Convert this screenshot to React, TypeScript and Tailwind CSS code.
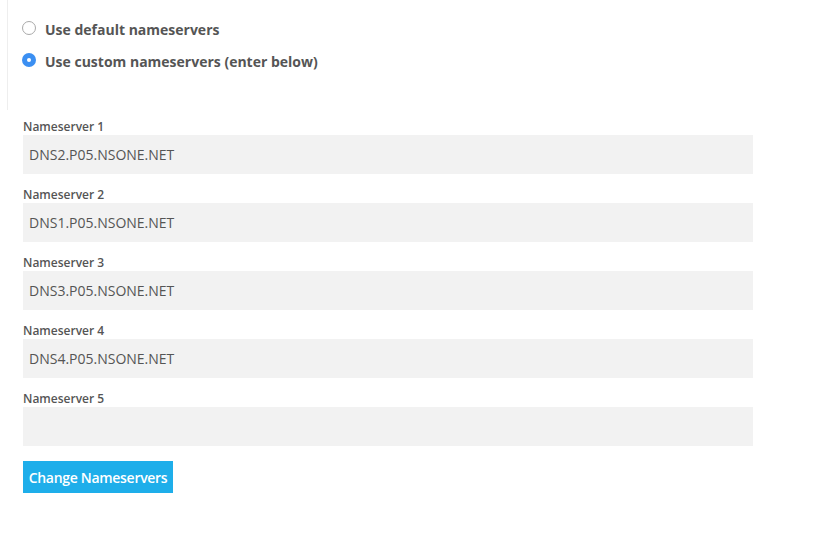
const servers = [
  'DNS2.P05.NSONE.NET',
  'DNS1.P05.NSONE.NET',
  'DNS3.P05.NSONE.NET',
  'DNS4.P05.NSONE.NET',
  '',
]

const Radio = ({ checked }: { checked?: boolean }) =>
  checked ? (
    <span className="w-[14px] h-[14px] rounded-full bg-[#3b8ff2] flex items-center justify-center shrink-0">
      <span className="w-[4px] h-[4px] rounded-full bg-white"></span>
    </span>
  ) : (
    <span className="w-[14px] h-[14px] rounded-full border border-[#a9a9a9] bg-white shrink-0"></span>
  )

export default function App() {
  return (
    <div className="w-[831px] h-[549px] bg-white text-[#555] font-['Open_Sans',sans-serif]">
      <div className="ml-[7px] h-[110px] border-l border-[#eeeeee] pl-[14px] pt-[20px]">
        <label className="flex items-center gap-[9px] h-[15px] text-[14px] font-bold leading-[16px]">
          <Radio />
          <span className="relative top-[2px]">Use default nameservers</span>
        </label>
        <label className="flex items-center gap-[9px] h-[15px] mt-[17px] text-[14px] font-bold leading-[16px]">
          <Radio checked />
          <span className="relative top-[2px]">Use custom nameservers (enter below)</span>
        </label>
      </div>
      <div className="pl-[23px] pt-[9px]">
        {servers.map((s, i) => (
          <div key={i} className="mb-[13px]">
            <div className="text-[12px] font-semibold leading-[16px]">Nameserver {i + 1}</div>
            <div className="w-[730px] h-[39px] bg-[#f2f2f2] px-[6px] flex items-center text-[14px]">
              {s}
            </div>
          </div>
        ))}
        <button className="mt-[15px] w-[150px] h-[32px] bg-[#1eaeea] text-white text-[14px] font-semibold tracking-[-0.3px] flex items-center justify-center">
          Change Nameservers
        </button>
      </div>
    </div>
  )
}
